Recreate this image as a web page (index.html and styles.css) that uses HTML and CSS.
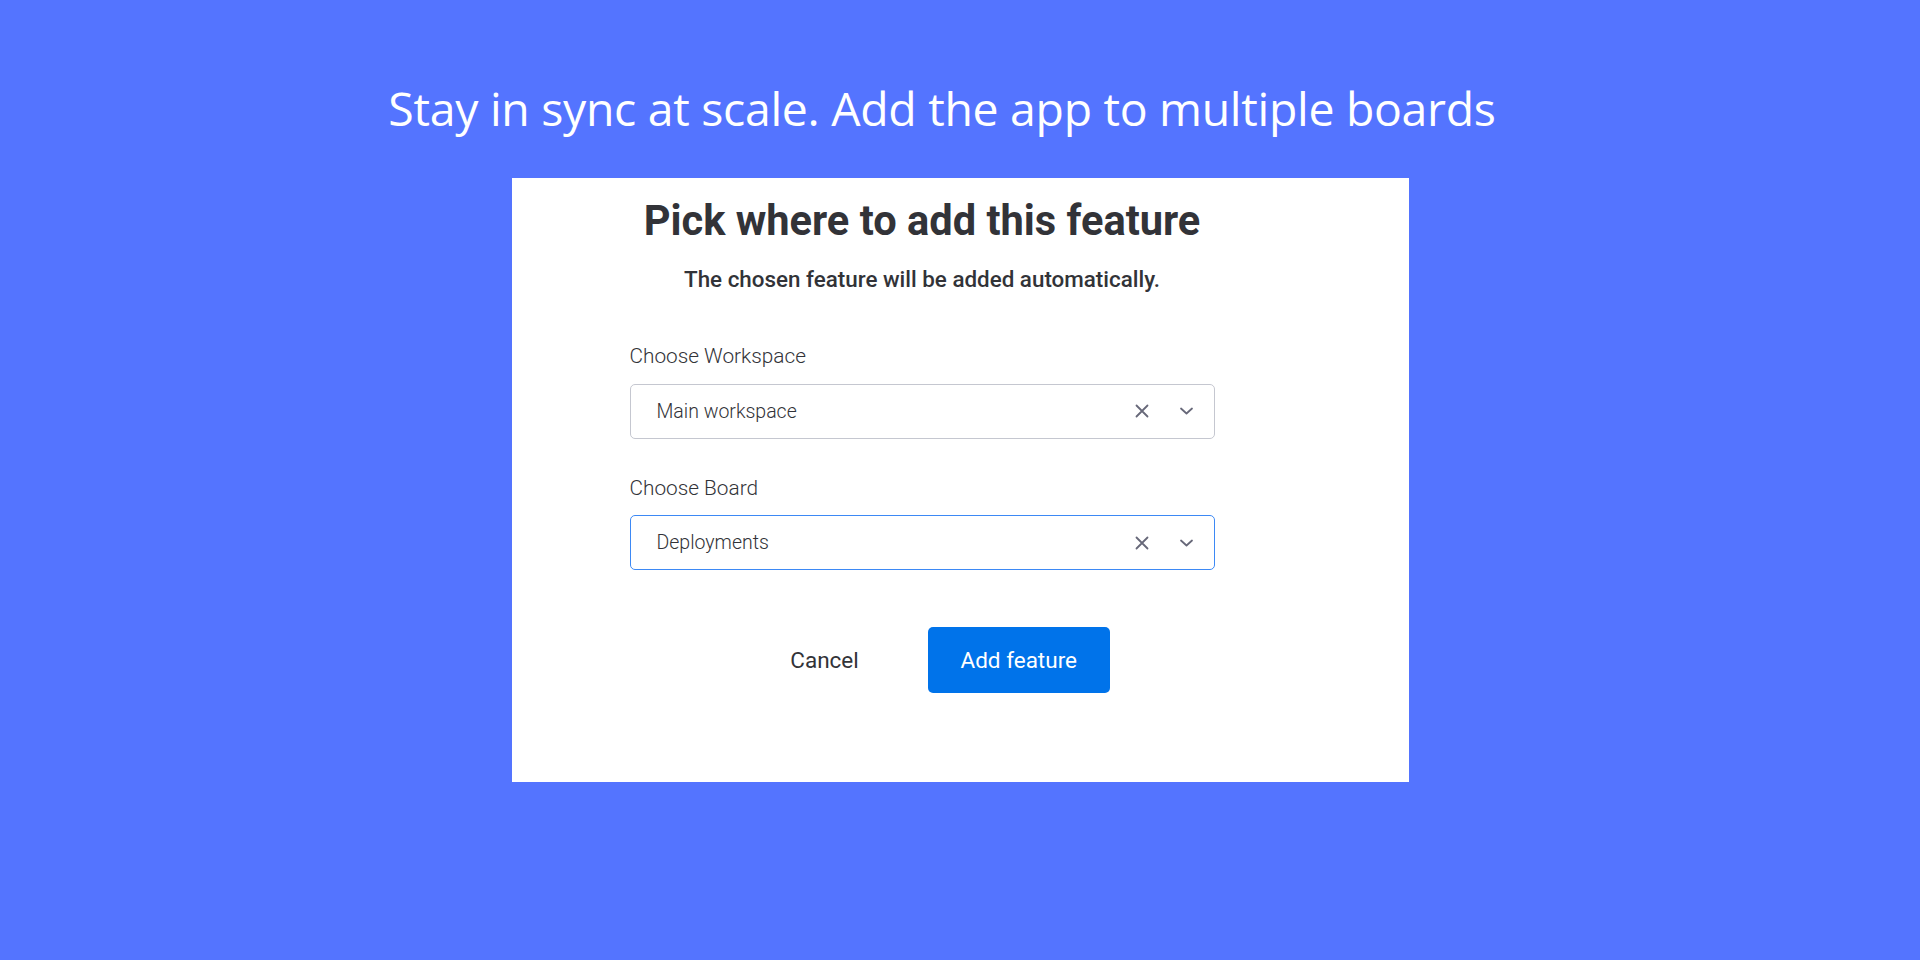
FILE: index.html
```html
<!DOCTYPE html>
<html lang="en">
<head>
<meta charset="utf-8">
<title>Add the app to multiple boards</title>
<link rel="stylesheet" href="styles.css">
</head>
<body>
<main class="page">
  <h1 class="promo-title">Stay in sync at scale. Add the app to multiple boards</h1>
  <section class="card">
    <div class="form">
      <h2 class="form-title">Pick where to add this feature</h2>
      <p class="form-subtitle">The chosen feature will be added automatically.</p>

      <label class="field-label label-first">Choose Workspace</label>
      <div class="select">
        <span class="select-value">Main workspace</span>
        <span class="select-icons">
          <svg class="icon-x" width="14" height="14" viewBox="0 0 14 14"><path d="M1.5 1.5L12.5 12.5M12.5 1.5L1.5 12.5" stroke="#676879" stroke-width="1.8" stroke-linecap="round" fill="none"/></svg>
          <svg class="icon-chev" width="15" height="10" viewBox="0 0 15 10"><path d="M2 2.5L7.5 7.5L13 2.5" stroke="#676879" stroke-width="1.8" stroke-linecap="round" stroke-linejoin="round" fill="none"/></svg>
        </span>
      </div>

      <label class="field-label">Choose Board</label>
      <div class="select select-focused">
        <span class="select-value">Deployments</span>
        <span class="select-icons">
          <svg class="icon-x" width="14" height="14" viewBox="0 0 14 14"><path d="M1.5 1.5L12.5 12.5M12.5 1.5L1.5 12.5" stroke="#676879" stroke-width="1.8" stroke-linecap="round" fill="none"/></svg>
          <svg class="icon-chev" width="15" height="10" viewBox="0 0 15 10"><path d="M2 2.5L7.5 7.5L13 2.5" stroke="#676879" stroke-width="1.8" stroke-linecap="round" stroke-linejoin="round" fill="none"/></svg>
        </span>
      </div>

      <div class="actions">
        <button class="btn btn-text">Cancel</button>
        <button class="btn btn-primary">Add feature</button>
      </div>
    </div>
  </section>
</main>
</body>
</html>
```
FILE: styles.css
```css
* { box-sizing: border-box; }
html, body {
  margin: 0;
  padding: 0;
  width: 1920px;
  height: 960px;
  background: #5474ff;
  overflow: hidden;
}
.page {
  display: flex;
  flex-direction: column;
  align-items: center;
  padding-top: 78px;
}
.promo-title {
  margin: 0;
  padding-right: 36px;
  font-family: "Open Sans", "Liberation Sans", sans-serif;
  font-weight: 400;
  font-size: 46.4px;
  line-height: 60px;
  color: #ffffff;
  letter-spacing: -0.3px;
}
.card {
  margin-top: 40px;
  width: 897px;
  height: 604px;
  background: #ffffff;
  padding: 19px 194px 0 118px;
}
.form {
  display: flex;
  flex-direction: column;
  font-family: Roboto, "Liberation Sans", sans-serif;
  color: #323338;
}
.form-title {
  margin: 0;
  font-size: 41.6px;
  font-weight: 700;
  line-height: 48px;
  text-align: center;
}
.form-subtitle {
  margin: 22px 0 0;
  font-size: 22.4px;
  font-weight: 500;
  line-height: 25px;
  text-align: center;
}
.field-label {
  display: block;
  font-size: 20.8px;
  font-weight: 300;
  line-height: 24px;
  margin: 37px 0 15.5px;
}
.label-first { margin-top: 52px; }
.select {
  height: 55px;
  border: 1.5px solid #c5c7d0;
  border-radius: 5px;
  display: flex;
  align-items: center;
  justify-content: space-between;
  padding: 0 20px 0 26px;
}
.select-focused { border-color: #3d89f5; }
.select-value {
  font-size: 19.5px;
  font-weight: 300;
  color: #323338;
}
.select-icons {
  display: flex;
  align-items: center;
  gap: 30px;
}
.icon-x, .icon-chev { display: block; }
.actions {
  display: flex;
  justify-content: center;
  align-items: center;
  gap: 69px;
  margin-top: 57px;
  padding-left: 56px;
}
.btn {
  font-family: Roboto, "Liberation Sans", sans-serif;
  font-size: 22.5px;
  border: none;
  cursor: pointer;
}
.btn-text {
  background: transparent;
  color: #323338;
  padding: 0;
}
.btn-primary {
  width: 182px;
  height: 66px;
  background: #0073ea;
  color: #ffffff;
  border-radius: 5px;
}
```
